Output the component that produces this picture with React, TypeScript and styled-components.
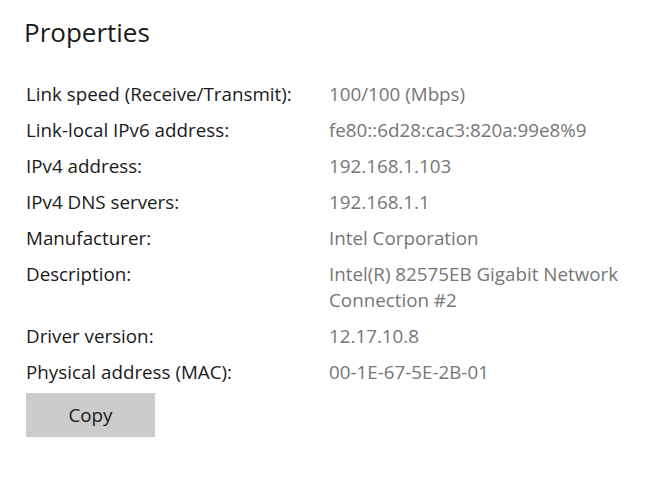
import React from 'react';
import styled, { createGlobalStyle } from 'styled-components';

const rows = [
    { label: 'Link speed (Receive/Transmit):', value: '100/100 (Mbps)' },
    { label: 'Link-local IPv6 address:', value: 'fe80::6d28:cac3:820a:99e8%9' },
    { label: 'IPv4 address:', value: '192.168.1.103' },
    { label: 'IPv4 DNS servers:', value: '192.168.1.1' },
    { label: 'Manufacturer:', value: 'Intel Corporation' },
    { label: 'Description:', value: 'Intel(R) 82575EB Gigabit Network Connection #2' },
    { label: 'Driver version:', value: '12.17.10.8' },
    { label: 'Physical address (MAC):', value: '00-1E-67-5E-2B-01' }
];

const GlobalStyle = createGlobalStyle`
    body{
        margin:0;
        background:#ffffff;
        font-family:"Open Sans","Noto Sans",sans-serif;
    }
`;

const App = () => {
  return (
    <Wrapper>
        <GlobalStyle />
        <Title>Properties</Title>
        <PropList>
            {rows.map((row) =>
                <React.Fragment key={row.label}>
                    <Label>{row.label}</Label>
                    <Value>{row.value}</Value>
                </React.Fragment>
            )}
        </PropList>
        <CopyButton>Copy</CopyButton>
    </Wrapper>
  )
}

export default App;

const Wrapper = styled.div`
    width:650px;
    height:490px;
    box-sizing:border-box;
    padding:14px 0 0 26px;
    display:flex;
    flex-direction:column;
    align-items:flex-start;
`;

const Title = styled.div`
    font-size:26px;
    line-height:36px;
    color:#1a1a1a;
    margin-left:-2px;
`;

const PropList = styled.div`
    display:grid;
    grid-template-columns:303px 315px;
    row-gap:10px;
    margin-top:31px;
    font-size:18.8px;
    line-height:26px;
`;

const Label = styled.div`
    color:#1a1a1a;
    white-space:nowrap;
`;

const Value = styled.div`
    color:#767676;
`;

const CopyButton = styled.button`
    margin-top:8px;
    width:129px;
    height:44px;
    border:none;
    background:#cccccc;
    color:#1a1a1a;
    font-family:inherit;
    font-size:18.8px;
    padding:0;
`;
